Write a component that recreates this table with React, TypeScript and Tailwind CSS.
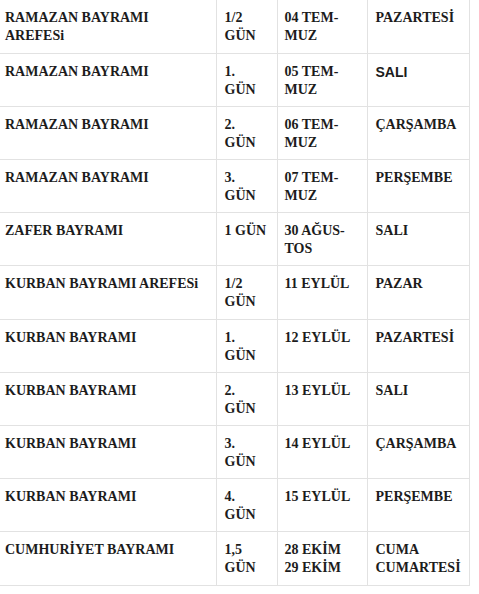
const rows: { name: string[]; len: string[]; date: string[]; day: string[]; sans?: boolean }[] = [
  { name: ['RAMAZAN BAYRAMI', 'AREFESi'], len: ['1/2', 'GÜN'], date: ['04 TEM-', 'MUZ'], day: ['PAZARTESİ'] },
  { name: ['RAMAZAN BAYRAMI'], len: ['1.', 'GÜN'], date: ['05 TEM-', 'MUZ'], day: ['SALI'], sans: true },
  { name: ['RAMAZAN BAYRAMI'], len: ['2.', 'GÜN'], date: ['06 TEM-', 'MUZ'], day: ['ÇARŞAMBA'] },
  { name: ['RAMAZAN BAYRAMI'], len: ['3.', 'GÜN'], date: ['07 TEM-', 'MUZ'], day: ['PERŞEMBE'] },
  { name: ['ZAFER BAYRAMI'], len: ['1 GÜN'], date: ['30 AĞUS-', 'TOS'], day: ['SALI'] },
  { name: ['KURBAN BAYRAMI AREFESi'], len: ['1/2', 'GÜN'], date: ['11 EYLÜL'], day: ['PAZAR'] },
  { name: ['KURBAN BAYRAMI'], len: ['1.', 'GÜN'], date: ['12 EYLÜL'], day: ['PAZARTESİ'] },
  { name: ['KURBAN BAYRAMI'], len: ['2.', 'GÜN'], date: ['13 EYLÜL'], day: ['SALI'] },
  { name: ['KURBAN BAYRAMI'], len: ['3.', 'GÜN'], date: ['14 EYLÜL'], day: ['ÇARŞAMBA'] },
  { name: ['KURBAN BAYRAMI'], len: ['4.', 'GÜN'], date: ['15 EYLÜL'], day: ['PERŞEMBE'] },
  { name: ['CUMHURİYET BAYRAMI'], len: ['1,5', 'GÜN'], date: ['28 EKİM', '29 EKİM'], day: ['CUMA', 'CUMARTESİ'] },
]

function Lines({ lines }: { lines: string[] }) {
  return (
    <>
      {lines.map((l, i) => (
        <div key={i} className="whitespace-nowrap">{l}</div>
      ))}
    </>
  )
}

export default function App() {
  return (
    <div className="w-[479px] h-[594px] bg-white overflow-hidden [font-family:'Liberation_Serif',serif] text-[14px] leading-[18px] font-bold text-[#1c1c1c]">
      <table className="border-collapse table-fixed w-[469px]">
        <colgroup>
          <col className="w-[216px]" />
          <col className="w-[61px]" />
          <col className="w-[90px]" />
          <col className="w-[102px]" />
        </colgroup>
        <tbody>
          {rows.map((r, i) => (
            <tr key={i} className="h-[53.2px] border-b border-[#e2e2e2]">
              <td className="align-top pt-[9px] pb-[7px] pl-[5px] pr-2">
                <Lines lines={r.name} />
              </td>
              <td className="align-top pt-[9px] pb-[7px] pl-[8px] border-l border-[#e2e2e2]">
                <Lines lines={r.len} />
              </td>
              <td className="align-top pt-[9px] pb-[7px] pl-[7px] border-l border-[#e2e2e2]">
                <Lines lines={r.date} />
              </td>
              <td
                className={
                  'align-top pt-[9px] pb-[7px] pl-[8px] border-l border-r border-[#e2e2e2] ' +
                  (r.sans ? "[font-family:'Liberation_Sans',sans-serif]" : '')
                }
              >
                <Lines lines={r.day} />
              </td>
            </tr>
          ))}
        </tbody>
      </table>
    </div>
  )
}
